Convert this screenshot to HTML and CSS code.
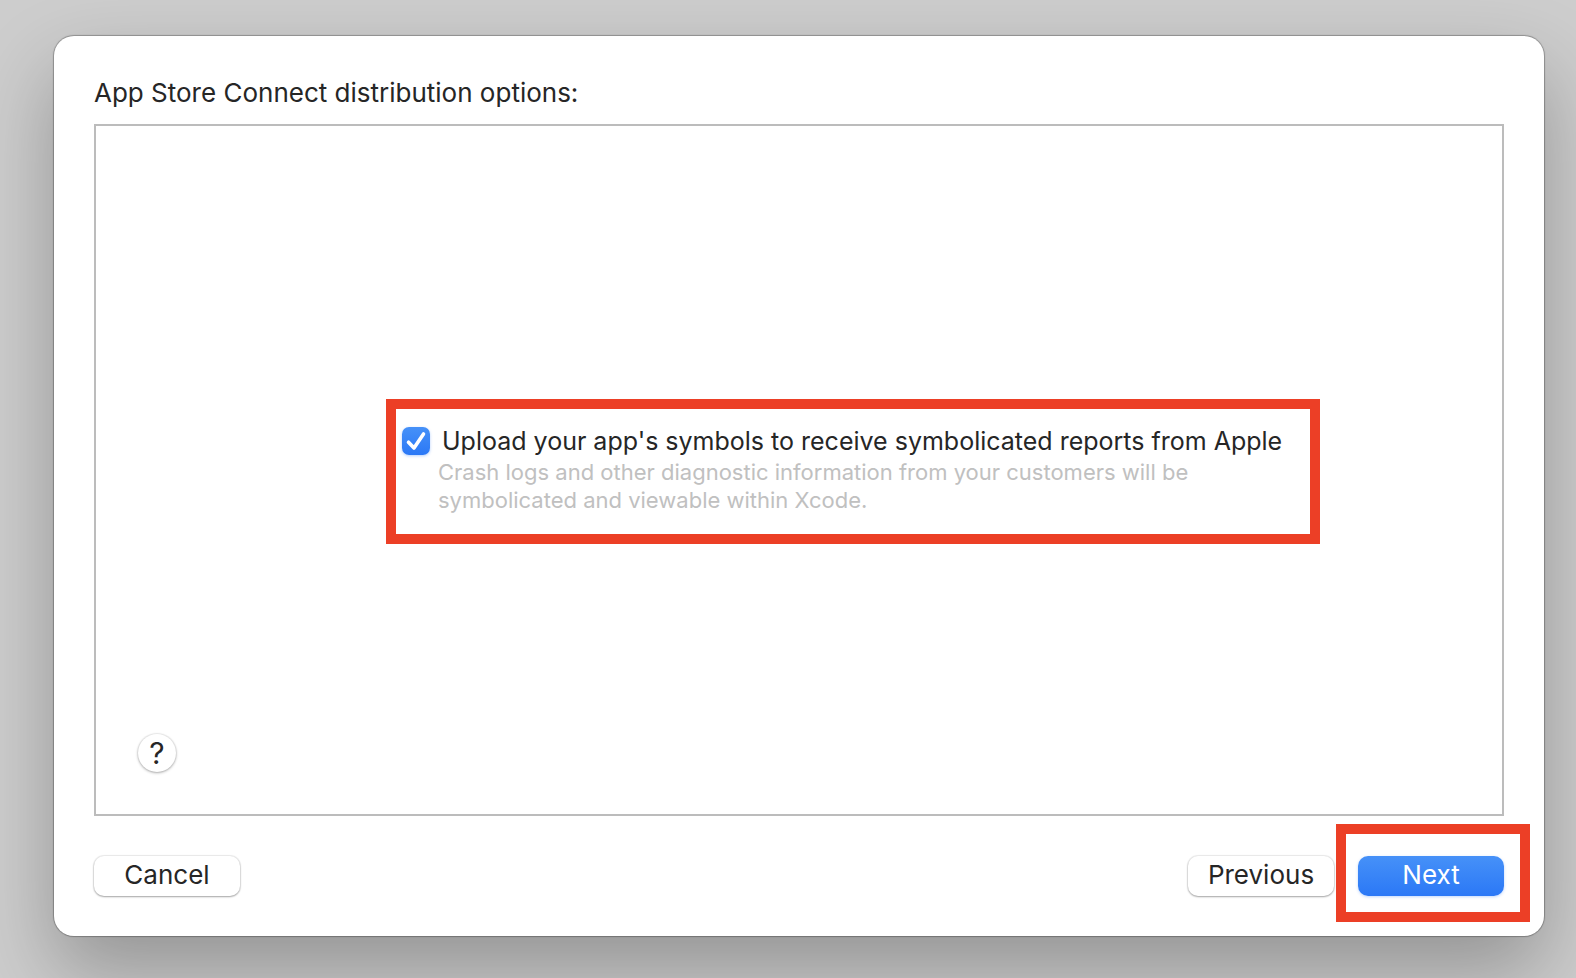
FILE: index.html
```html
<!DOCTYPE html>
<html lang="en">
<head>
<meta charset="utf-8">
<title>App Store Connect distribution options</title>
<link rel="stylesheet" href="styles.css">
</head>
<body>
<main class="sheet">
  <h1 class="title">App Store Connect distribution options:</h1>
  <section class="panel">
    <div class="option">
      <input class="check" type="checkbox" id="symbols" aria-describedby="symbols-note" checked>
      <svg class="tick" viewBox="0 0 28 28" aria-hidden="true"><path d="M6.5 15.2 12 21 21.5 7"/></svg>
      <label class="option-label" for="symbols">Upload your app's symbols to receive symbolicated reports from Apple</label>
      <p class="note" id="symbols-note">Crash logs and other diagnostic information from your customers will be symbolicated and viewable within Xcode.</p>
    </div>
    <button class="help" type="button" aria-label="Help">?</button>
  </section>
  <footer class="actions">
    <button class="button" type="button">Cancel</button>
    <div class="steps">
      <button class="button" type="button">Previous</button>
      <div class="marked"><button class="button primary" type="button">Next</button></div>
    </div>
  </footer>
</main>
</body>
</html>
```
FILE: styles.css
```css
* { box-sizing: border-box; }

body {
  margin: 0;
  min-height: 100vh;
  display: flex;
  padding: 36px 32px 42px 54px;
  overflow: hidden;
  background: #cdcdcd;
  color: #262626;
  font-family: Inter, Roboto, sans-serif;
}

.sheet {
  flex: 1;
  display: flex;
  flex-direction: column;
  padding: 40px;
  border-radius: 20px;
  background: #fff;
  box-shadow: 0 0 1px 1px rgba(0, 0, 0, 0.28), 0 36px 80px rgba(0, 0, 0, 0.28);
}

.title {
  margin: 0;
  padding: 1px 0 15px;
  font-size: 26px;
  line-height: 32px;
  font-weight: 400;
}

.panel {
  flex: 1;
  position: relative;
  display: flex;
  align-items: center;
  justify-content: center;
  padding: 2px 0 0 108px;
  border: 2px solid #bcbcbc;
}

.option {
  width: 934px;
  max-width: 100%;
  display: grid;
  grid-template-columns: 28px auto;
  column-gap: 12px;
  align-items: center;
  padding: 15px 8px 20px 6px;
  border: 10px solid #ec3f26;
}

.check {
  grid-area: 1 / 1;
  appearance: none;
  width: 28px;
  height: 28px;
  margin: 0;
  border-radius: 7px;
  background: linear-gradient(#4691f8, #2b78f6);
  box-shadow: 0 1px 3px rgba(43, 120, 246, 0.35);
}

.tick {
  grid-area: 1 / 1;
  width: 28px;
  height: 28px;
  fill: none;
  stroke: #fff;
  stroke-width: 3.6;
  stroke-linecap: round;
  stroke-linejoin: round;
  pointer-events: none;
}

.check:not(:checked) + .tick { display: none; }

.option-label {
  font-size: 25px;
  line-height: 34px;
}

.note {
  grid-column: 1 / -1;
  max-width: 820px;
  margin: 0;
  padding-left: 36px;
  color: #c0c0c0;
  font-size: 22px;
  line-height: 28px;
}

.help {
  position: absolute;
  left: 42px;
  bottom: 42px;
  width: 38px;
  height: 38px;
  padding: 0;
  border: 0;
  border-radius: 50%;
  background: #fff;
  color: #262626;
  box-shadow: 0 0 1px 1px rgba(0, 0, 0, 0.06), 0 1px 3px rgba(0, 0, 0, 0.3);
  font: 400 30px/38px Inter, sans-serif;
}

.actions {
  display: flex;
  justify-content: space-between;
  padding-top: 40px;
}

.steps {
  display: flex;
  gap: 24px;
}

.button {
  width: 146px;
  height: 40px;
  padding: 0 0 2px;
  border: 0;
  border-radius: 10px;
  background: #fff;
  color: #262626;
  box-shadow: 0 0 1px 1px rgba(0, 0, 0, 0.08), 0 1px 2px rgba(0, 0, 0, 0.3);
  font: 400 26px/36px Inter, sans-serif;
}

.primary {
  display: block;
  background: linear-gradient(#4691f8, #2b78f6);
  color: #fff;
  box-shadow: 0 1px 3px rgba(43, 120, 246, 0.3);
}

.marked { position: relative; }

.marked::after {
  content: "";
  position: absolute;
  inset: -32px -26px -26px -22px;
  border: 10px solid #ec3f26;
  pointer-events: none;
}
```
